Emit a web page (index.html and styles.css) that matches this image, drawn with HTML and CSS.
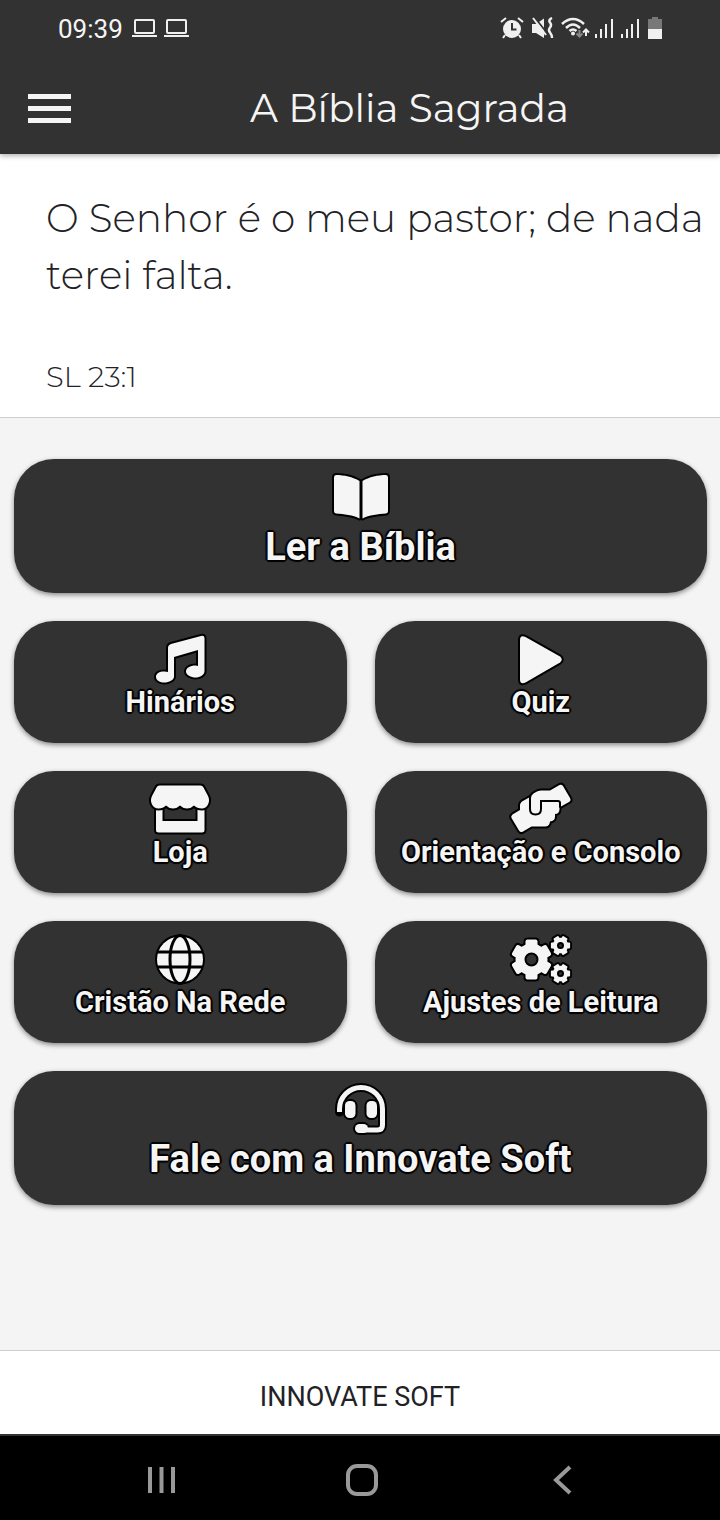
FILE: index.html
```
<!DOCTYPE html>
<html lang="pt-BR">
<head>
<meta charset="utf-8">
<meta name="viewport" content="width=device-width, initial-scale=1">
<title>A Bíblia Sagrada</title>
<link rel="stylesheet" href="styles.css">
</head>
<body>
<div class="screen">
  <header class="header">
    <div class="status">
      <time class="clock">09:39</time>
      <svg class="laptops" width="58" height="22" viewBox="0 0 58 22" aria-hidden="true">
        <g fill="none" stroke="#f0f0f0" stroke-width="2"><rect x="4" y="2" width="19" height="13" rx="1"/><rect x="36" y="2" width="19" height="13" rx="1"/></g>
        <path d="M1 17H26V19H1ZM33 17H58V19H33Z" fill="#f0f0f0"/>
      </svg>
      <svg class="indicators" width="164" height="24" viewBox="0 0 164 24" aria-hidden="true">
        <g fill="#f0f0f0">
          <circle cx="12" cy="12" r="9"/>
          <path d="M32 7H36L44 1.500V21L36 16H32Z"/>
          <circle cx="73" cy="16.500" r="2"/>
          <path d="M95 17h2v4h-2zM100 12h2v9h-2zM105 7h2v14h-2zM111 2h2v19h-2zM121 17h2v4h-2zM126 12h2v9h-2zM131 7h2v14h-2zM137 2h2v19h-2z"/>
          <path d="M148 12h14v10h-14z"/>
        </g>
        <path d="M152 0h6v2h4v10h-14V2h4z" fill="#787878"/>
        <g fill="none" stroke="#f0f0f0" stroke-width="2">
          <path d="M1 5 6 1M18 1 23 5M5 18 3 21M19 18 21 21"/>
          <path d="M52 1Q48 3 50 5.500T50 10.500 50 15.500 52 21" stroke-width="2.500"/>
          <path d="M62 7Q73-3 84 7M66 11Q73 4 80 11M69.500 14Q73 11 76.500 14" stroke-width="2.500"/>
          <path d="M86 19V13M83 15.500 86 12.500 89 15.500"/>
        </g>
        <path d="M79.500 13V19M76.500 16.500 79.500 19.500 82.500 16.500" fill="none" stroke="#888" stroke-width="2"/>
        <path d="M12 6V12.500H16.500" fill="none" stroke="#323232" stroke-width="2"/>
        <path d="M35 1 47 16" stroke="#323232" stroke-width="2"/>
        <path d="M33 1 46 18" stroke="#f0f0f0" stroke-width="2"/>
      </svg>
    </div>
    <div class="appbar">
      <button class="menu" type="button" aria-label="Menu"><span></span><span></span><span></span></button>
      <h1 class="title">A Bíblia Sagrada</h1>
    </div>
  </header>

  <section class="verse">
    <p class="verse-text">O Senhor é o meu pastor; de nada terei falta.</p>
    <p class="verse-ref">SL 23:1</p>
  </section>

  <main class="actions">
    <button class="tile tile-wide" type="button">
      <svg class="icon" viewBox="0 0 64 50" aria-hidden="true">
        <path class="shape" d="M7 4C15 4 24 6 30.500 10V47.500C24 44 15 43 7 42.500Q5 42 5 40V6.500Q5 4 7 4Z"/>
        <path class="shape" d="M57 4C49 4 40 6 33.500 10V47.500C40 44 49 43 57 42.500Q59 42 59 40V6.500Q59 4 57 4Z"/>
      </svg>
      <span class="label">Ler a Bíblia</span>
    </button>
    <button class="tile" type="button">
      <svg class="icon" viewBox="0 0 64 50" aria-hidden="true">
        <path class="shape" d="M23 11 53 3Q56.500 2 56.500 5.500V38C56.500 42 52 44.500 47.500 44.500S38 42 38 38.500 42 32.500 47.500 32.500Q49 32.500 50 33V17L26 24V43.500C26 47 21 49.500 16.500 49.500S8 47.500 8 44 11 38.500 16.500 38.500Q18.500 38.500 20 39V15Q20 12 23 11Z"/>
      </svg>
      <span class="label">Hinários</span>
    </button>
    <button class="tile" type="button">
      <svg class="icon" viewBox="0 0 64 50" aria-hidden="true">
        <path class="shape" d="M11 7Q11 1.500 16.500 4L51 23.500Q54.500 26.500 51 29.500L16.500 49.500Q11 52 11 46.500Z"/>
      </svg>
      <span class="label">Quiz</span>
    </button>
    <button class="tile" type="button">
      <svg class="icon" viewBox="0 0 64 50" aria-hidden="true">
        <path class="shape" d="M8 25H14.500V38H49.500V25H56.500V47Q56.500 49.500 54 49.500H10.500Q8 49.500 8 47Z"/>
        <path class="shape" d="M11.500 2.500H52.500Q54.500 2.500 55.500 4.500L60 13C63 19 59 25.500 54 25.500Q49 25.500 46 22.500Q43 25.500 39 25.500T32 22.500Q29 25.500 25 25.500T18 22.500Q15 25.500 10.500 25.500C5 25.500 1 19 4 13L8.500 4.500Q9.500 2.500 11.500 2.500Z"/>
      </svg>
      <span class="label">Loja</span>
    </button>
    <button class="tile" type="button">
      <svg class="icon" viewBox="0 0 64 50" aria-hidden="true">
        <path class="shape" d="M21 14 13 18.500Q11 20 11 22V27L3.500 31.500Q1.500 33 2.500 35L10 47.500Q11.500 50 14 48.500L22.500 43.500H36Q40.500 43.500 41 38.500Q46 38 46 33.500V31Q50.500 31 50.500 26V20Q50.500 18.500 49 18.500H32V27Z"/>
        <path class="shape" d="M50.500 2 41 7.500H32Q29 7.500 27 9L24.500 10.500Q22 12 22 15V26Q22 30.500 26.500 30.500T31 26V17H49Q52 17 52 20V23.500L60 19Q62.500 17.500 61 15L54 3Q52.500 1 50.500 2Z"/>
      </svg>
      <span class="label">Orientação e Consolo</span>
    </button>
    <button class="tile" type="button">
      <svg class="icon" viewBox="0 0 64 50" aria-hidden="true">
        <circle class="shape" cx="32" cy="26.500" r="23"/>
        <g class="rule"><ellipse cx="32" cy="26.500" rx="10" ry="24"/><path d="M9 19H55M9 34H55"/></g>
      </svg>
      <span class="label">Cristão Na Rede</span>
    </button>
    <button class="tile" type="button">
      <svg class="icon" viewBox="0 0 64 50" aria-hidden="true">
        <defs>
          <g id="gear">
            <circle r="16"/>
            <rect x="-6" y="-20" width="12" height="40" rx="2"/>
            <rect x="-6" y="-20" width="12" height="40" rx="2" transform="rotate(60)"/>
            <rect x="-6" y="-20" width="12" height="40" rx="2" transform="rotate(120)"/>
          </g>
        </defs>
        <g class="edge">
          <use href="#gear" x="22.500" y="26.500"/>
          <use href="#gear" class="edge-small" transform="translate(51.500 12.500) rotate(30) scale(.48)"/>
          <use href="#gear" class="edge-small" transform="translate(51.500 40.500) rotate(30) scale(.48)"/>
        </g>
        <g class="fill">
          <use href="#gear" x="22.500" y="26.500"/>
          <use href="#gear" transform="translate(51.500 12.500) rotate(30) scale(.48)"/>
          <use href="#gear" transform="translate(51.500 40.500) rotate(30) scale(.48)"/>
        </g>
        <g class="hole"><circle cx="22.500" cy="26.500" r="6"/><circle cx="51.500" cy="12.500" r="2.500"/><circle cx="51.500" cy="40.500" r="2.500"/></g>
      </svg>
      <span class="label">Ajustes de Leitura</span>
    </button>
    <button class="tile tile-wide" type="button">
      <svg class="icon" viewBox="0 0 64 50" aria-hidden="true">
        <defs><path id="band" d="M10.500 29V26A21.500 21.500 0 0 1 53.500 26V42Q53.500 47 48.500 47H34"/></defs>
        <use href="#band" class="band-edge"/>
        <rect class="shape" x="26" y="41" width="13" height="9" rx="4.500"/>
        <use href="#band" class="band"/>
        <rect class="shape" x="16" y="18" width="10.500" height="17" rx="4.500"/>
        <rect class="shape" x="37.500" y="18" width="10.500" height="17" rx="4.500"/>
      </svg>
      <span class="label">Fale com a Innovate Soft</span>
    </button>
  </main>

  <footer class="brand">INNOVATE SOFT</footer>
  <nav class="system-nav" aria-label="Sistema">
    <button type="button" aria-label="Recentes"><svg width="36" height="36" viewBox="0 0 36 36"><path d="M7 5V31M18.500 5V31M30 5V31"/></svg></button>
    <button type="button" aria-label="Início"><svg width="36" height="36" viewBox="0 0 36 36"><rect x="4" y="4" width="28" height="28" rx="9"/></svg></button>
    <button type="button" aria-label="Voltar"><svg width="36" height="36" viewBox="0 0 36 36"><path d="M25 5 11 18 25 31"/></svg></button>
  </nav>
</div>
</body>
</html>
```
FILE: styles.css
```
* { box-sizing: border-box; }

body {
  margin: 0;
  background: #f4f4f4;
  color: #222226;
  font-family: Roboto, sans-serif;
}

button {
  margin: 0;
  padding: 0;
  border: 0;
  background: none;
  color: inherit;
  font: inherit;
}

.screen {
  display: flex;
  flex-direction: column;
  min-height: 100vh;
}

.header {
  position: relative;
  background: #323232;
  color: #f5f5f5;
  box-shadow: 0 2px 5px rgba(0, 0, 0, 0.3);
}

.status {
  display: flex;
  align-items: center;
  gap: 8px;
  height: 58px;
  padding: 0 56px 0 58px;
}

.clock { font-size: 26px; }

.indicators { margin-left: auto; }

.appbar {
  display: flex;
  align-items: center;
  height: 96px;
  padding: 4px 28px 0;
}

.menu {
  display: flex;
  flex-direction: column;
  gap: 7px;
  width: 43px;
}

.menu span {
  height: 5px;
  background: #f5f5f5;
}

.title {
  flex: 1;
  margin: 0;
  padding-left: 56px;
  font: 400 39px/56px Montserrat, Lato, sans-serif;
  text-align: center;
}

.verse {
  padding: 36px 16px 20px 46px;
  border-bottom: 1px solid #cfcfcf;
  background: #fff;
  font-family: Montserrat, Lato, sans-serif;
  font-weight: 300;
}

.verse p { margin: 0; }

.verse-text {
  font-size: 39px;
  line-height: 57px;
}

.verse .verse-ref {
  margin-top: 53px;
  font-size: 29px;
  line-height: 40px;
}

.actions {
  display: grid;
  flex: 1;
  grid-template-columns: 1fr 1fr;
  align-content: start;
  gap: 28px;
  padding: 41px 13px 40px 14px;
}

.tile {
  display: flex;
  flex-direction: column;
  align-items: center;
  padding: 12px 0 22px;
  border-radius: 40px;
  background: #323232;
  box-shadow: 0 2px 5px rgba(0, 0, 0, 0.45);
  color: #f5f5f5;
  font-size: 29px;
  font-weight: 700;
  line-height: 38px;
}

.tile-wide {
  grid-column: 1 / -1;
  padding-bottom: 20px;
  font-size: 38px;
  line-height: 52px;
}

.label {
  text-shadow: 2px 0 1px #000, -2px 0 1px #000, 0 2px 1px #000, 0 -2px 1px #000,
    1px 1px 1px #000, -1px 1px 1px #000, 1px -1px 1px #000, -1px -1px 1px #000;
}

.icon {
  width: 64px;
  height: 50px;
  overflow: visible;
}

.shape {
  fill: #f5f5f5;
  stroke: #000;
  stroke-width: 4px;
  stroke-linejoin: round;
  paint-order: stroke;
}

.rule { fill: none; stroke: #000; stroke-width: 3px; }
.edge { fill: #000; stroke: #000; stroke-width: 4px; }
.edge-small { stroke-width: 8px; }
.fill { fill: #f5f5f5; }
.hole { fill: #323232; stroke: #000; stroke-width: 2px; }
.band-edge { fill: none; stroke: #000; stroke-width: 9px; stroke-linecap: round; }
.band { fill: none; stroke: #f5f5f5; stroke-width: 5px; }

.brand {
  height: 84px;
  border-top: 1px solid #cfcfcf;
  background: #fff;
  font-size: 27px;
  line-height: 92px;
  text-align: center;
}

.system-nav {
  display: flex;
  justify-content: center;
  gap: 165px;
  height: 86px;
  padding: 4px 0 0 4px;
  border-top: 2px solid #323232;
  background: #000;
}

.system-nav svg {
  display: block;
  fill: none;
  stroke: #999;
  stroke-width: 4px;
}
```
